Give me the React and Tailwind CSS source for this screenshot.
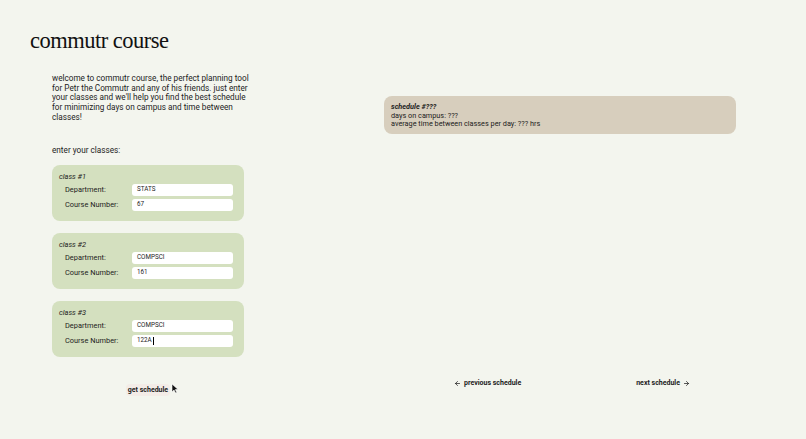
import { ArrowLeft, ArrowRight } from 'lucide-react';

const classes = [
  { n: 1, dept: 'STATS', num: '67' },
  { n: 2, dept: 'COMPSCI', num: '161' },
  { n: 3, dept: 'COMPSCI', num: '122A', focused: true },
];

function Field({ label, value, focused }) {
  return (
    <div className="flex items-center h-[15px]">
      <span className="w-[73px] pl-[6px] text-[7.4px] text-[#1c1c1c]">{label}</span>
      <div className="flex-1 h-[12px] bg-white rounded-[3px] flex items-center pl-[5px] text-[6.3px] text-[#1c1c1c]">
        {value}
        {focused && <span className="w-px h-[8px] bg-black ml-px" />}
      </div>
    </div>
  );
}

function ClassCard({ item }) {
  return (
    <div className="bg-[#d4e0bf] rounded-[8px] h-[56px] pl-[7px] pr-[11px] pt-[7px]">
      <p className="italic text-[7.4px] text-[#1c1c1c] leading-[10px] mb-[1px]">class #{item.n}</p>
      <Field label="Department:" value={item.dept} />
      <Field label="Course Number:" value={item.num} focused={item.focused} />
    </div>
  );
}

export default function App() {
  return (
    <div className="min-h-screen bg-[#f3f5ee] pl-[30px] pt-[27px] text-[#1c1c1c]" style={{ fontFamily: 'Roboto, "Noto Sans", sans-serif' }}>
      <h1 className="text-[22.5px] leading-[28px] tracking-[-0.5px] text-[#111]" style={{ fontFamily: '"Liberation Serif", "DejaVu Serif", serif' }}>
        commutr course
      </h1>

      <div className="flex">
        <div className="ml-[22px] w-[200px] mt-[19px]">
          <p className="text-[8.2px] leading-[9.7px]">
            welcome to commutr course, the perfect planning tool for Petr the Commutr and any of his friends. just enter your classes and we'll help you find the best schedule for minimizing days on campus and time between classes!
          </p>
          <p className="text-[8.2px] leading-[10px] mt-[22px]">enter your classes:</p>
          <div className="w-[192px] mt-[10px] flex flex-col gap-[12px]">
            {classes.map((c) => (
              <ClassCard key={c.n} item={c} />
            ))}
          </div>
          <div className="w-[192px] flex justify-center mt-[27px]">
            <div className="relative flex items-center">
              <button className="text-[7px] font-bold rounded-[4px] bg-[#f3ece7] px-[2px] py-px leading-[10px]">
                get schedule
              </button>
              <svg className="absolute left-[45px] top-[-1px]" width="8" height="11" viewBox="0 0 8 11">
                <path d="M1 1 L1 9 L3 7 L4.6 10 L5.8 9.4 L4.3 6.6 L7 6.4 Z" fill="#111" stroke="#fff" strokeWidth="0.6" />
              </svg>
            </div>
          </div>
        </div>

        <div className="ml-[132px] w-[352px] mt-[41px]">
          <div className="bg-[#d7cebd] rounded-[8px] h-[38px] px-[7px] pt-[7px] text-[7.3px] leading-[8.6px]">
            <p className="italic font-bold">schedule #???</p>
            <p>days on campus: ???</p>
            <p>average time between classes per day: ??? hrs</p>
          </div>
          <div className="flex justify-between pl-[70px] pr-[46px] mt-[244px] text-[7px] font-bold">
            <button className="flex items-center gap-[3px]">
              <ArrowLeft size={7} strokeWidth={2.5} />
              previous schedule
            </button>
            <button className="flex items-center gap-[3px]">
              next schedule
              <ArrowRight size={7} strokeWidth={2.5} />
            </button>
          </div>
        </div>
      </div>
    </div>
  );
}
